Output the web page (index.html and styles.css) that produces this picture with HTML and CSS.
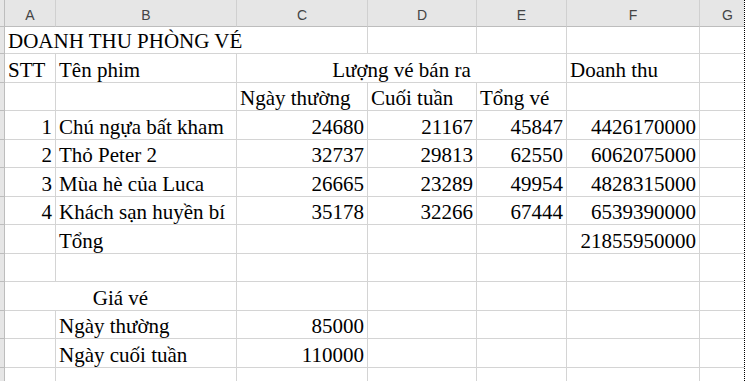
FILE: index.html
```html
<!DOCTYPE html>
<html lang="vi">
<head>
<meta charset="utf-8">
<title>DOANH THU PHÒNG VÉ</title>
<link rel="stylesheet" href="styles.css">
</head>
<body>
<div class="sheet">
  <div class="grid">
    <div class="corner"></div>
    <div class="ch">A</div><div class="ch">B</div><div class="ch">C</div><div class="ch">D</div><div class="ch">E</div><div class="ch">F</div><div class="ch">G</div>

    <div class="rh"></div>
    <div class="c span3">DOANH THU PHÒNG VÉ</div><div class="c"></div><div class="c"></div><div class="c"></div><div class="c"></div>

    <div class="rh"></div>
    <div class="c">STT</div><div class="c">Tên phim</div><div class="c span3 ctr">Lượng vé bán ra</div><div class="c">Doanh thu</div><div class="c"></div>

    <div class="rh"></div>
    <div class="c"></div><div class="c"></div><div class="c">Ngày thường</div><div class="c">Cuối tuần</div><div class="c">Tổng vé</div><div class="c"></div><div class="c"></div>

    <div class="rh"></div>
    <div class="c num">1</div><div class="c">Chú ngựa bất kham</div><div class="c num">24680</div><div class="c num">21167</div><div class="c num">45847</div><div class="c num">4426170000</div><div class="c"></div>

    <div class="rh"></div>
    <div class="c num">2</div><div class="c">Thỏ Peter 2</div><div class="c num">32737</div><div class="c num">29813</div><div class="c num">62550</div><div class="c num">6062075000</div><div class="c"></div>

    <div class="rh"></div>
    <div class="c num">3</div><div class="c">Mùa hè của Luca</div><div class="c num">26665</div><div class="c num">23289</div><div class="c num">49954</div><div class="c num">4828315000</div><div class="c"></div>

    <div class="rh"></div>
    <div class="c num">4</div><div class="c">Khách sạn huyền bí</div><div class="c num">35178</div><div class="c num">32266</div><div class="c num">67444</div><div class="c num">6539390000</div><div class="c"></div>

    <div class="rh"></div>
    <div class="c"></div><div class="c">Tổng</div><div class="c"></div><div class="c"></div><div class="c"></div><div class="c num">21855950000</div><div class="c"></div>

    <div class="rh"></div>
    <div class="c"></div><div class="c"></div><div class="c"></div><div class="c"></div><div class="c"></div><div class="c"></div><div class="c"></div>

    <div class="rh"></div>
    <div class="c span2 ctr">Giá vé</div><div class="c"></div><div class="c"></div><div class="c"></div><div class="c"></div><div class="c"></div>

    <div class="rh"></div>
    <div class="c"></div><div class="c">Ngày thường</div><div class="c num">85000</div><div class="c"></div><div class="c"></div><div class="c"></div><div class="c"></div>

    <div class="rh"></div>
    <div class="c"></div><div class="c">Ngày cuối tuần</div><div class="c num">110000</div><div class="c"></div><div class="c"></div><div class="c"></div><div class="c"></div>

    <div class="rh"></div>
    <div class="c"></div><div class="c"></div><div class="c"></div><div class="c"></div><div class="c"></div><div class="c"></div><div class="c"></div>
  </div>
  <div class="pagebreak"></div>
</div>
</body>
</html>
```

FILE: styles.css
```css
html, body {
  margin: 0;
  padding: 0;
  background: #ffffff;
}
body {
  width: 747px;
  height: 381px;
  overflow: hidden;
}
.sheet {
  position: relative;
  width: 747px;
  height: 381px;
  overflow: hidden;
}
.grid {
  display: grid;
  grid-template-columns: 5px 51px 181px 131px 109px 90px 133px 56px;
  grid-template-rows: 27px 27px;
  grid-auto-rows: 28.5px;
  width: 756px;
}
.corner, .rh {
  box-sizing: border-box;
  background: #e6e6e6;
  border-right: 1px solid #bdbdbd;
  border-bottom: 1px solid #bdbdbd;
}
.ch {
  box-sizing: border-box;
  background: #e6e6e6;
  border-right: 1px solid #d0d0d0;
  border-bottom: 1px solid #bdbdbd;
  display: flex;
  justify-content: center;
  align-items: flex-end;
  padding-bottom: 3px;
  font-family: "Liberation Sans", Arial, sans-serif;
  font-size: 14px;
  color: #444444;
}
.c {
  box-sizing: border-box;
  border-right: 1px solid #d4d4d4;
  border-bottom: 1px solid #d4d4d4;
  display: flex;
  align-items: flex-end;
  padding: 0 3px 0 3px;
  font-family: "Liberation Serif", "Times New Roman", serif;
  font-size: 21px;
  line-height: 24px;
  color: #000000;
  white-space: nowrap;
  overflow: visible;
}
.num {
  justify-content: flex-end;
}
.ctr {
  justify-content: center;
}
.span2 {
  grid-column: span 2;
}
.span3 {
  grid-column: span 3;
}
.pagebreak {
  position: absolute;
  top: 0;
  left: 744px;
  width: 3px;
  height: 381px;
  box-sizing: border-box;
  background: #ffffff;
  border-left: 1px dotted #000000;
}
```
